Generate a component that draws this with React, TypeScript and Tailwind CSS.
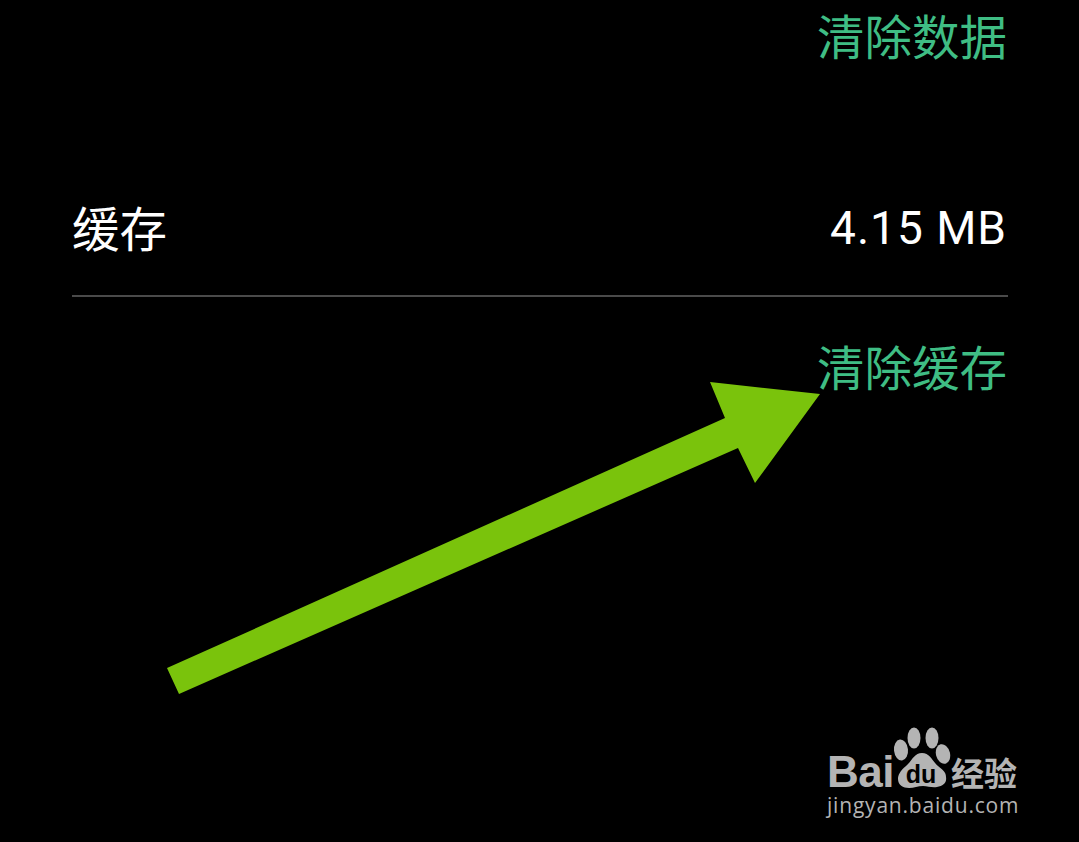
const cjk = "font-['Noto_Sans_CJK_SC','Noto_Sans',sans-serif]";

function Arrow() {
  return (
    <svg className="absolute left-0 top-0" width="1079" height="842" viewBox="0 0 1079 842">
      <polygon
        points="167,668 179,694 738,448 755,483 820,394 710,382 725,418"
        fill="#7ac30c"
      />
    </svg>
  );
}

function Watermark() {
  return (
    <div className="absolute left-[827px] top-[726px] w-[196px] h-[96px] text-[#b4b4b4]">
      <div className="absolute left-0 top-[28px] font-['Liberation_Sans',sans-serif] font-bold text-[44px] leading-[36px] tracking-[-0.5px]">
        Bai
      </div>
      <svg className="absolute left-[64px] top-0" width="60" height="66" viewBox="0 0 60 66">
        <ellipse cx="10" cy="24" rx="7" ry="10.5" transform="rotate(-6 10 24)" fill="currentColor" />
        <ellipse cx="23" cy="12" rx="6.5" ry="10.5" fill="currentColor" />
        <ellipse cx="41" cy="12" rx="6.5" ry="10.5" fill="currentColor" />
        <ellipse cx="52" cy="28" rx="7" ry="10" transform="rotate(-14 52 28)" fill="currentColor" />
        <path
          d="M31 27C23 27 21 35 15 40C9 45 7 49 7 53C7 59 12 62 18 62C23 62 27 60 32 60C37 60 41 62 46 61C52 60 56 57 55 51C55 46 52 44 47 40C42 36 39 27 31 27Z"
          fill="currentColor"
        />
      </svg>
      <div className="absolute left-[72px] top-[36px] w-[44px] text-center font-['Liberation_Sans',sans-serif] font-bold text-[25px] leading-[24px] text-black">
        du
      </div>
      <div className={`absolute left-[124px] top-[29px] font-bold text-[33px] leading-[34px] whitespace-nowrap ${cjk}`}>
        经验
      </div>
      <div className="absolute left-0 top-[67px] font-['Open_Sans',sans-serif] text-[21px] leading-[24px] tracking-[0.8px] whitespace-nowrap">
        jingyan.baidu.com
      </div>
    </div>
  );
}

export default function App() {
  return (
    <div className={`relative w-[1079px] h-[842px] overflow-hidden bg-black ${cjk}`}>
      <div className="flex flex-col px-[72px]">
        <div className="flex justify-end h-[70px] items-center text-[47.5px] leading-[60px] text-[#3fbd84]">
          清除数据
        </div>
        <div className="flex justify-between items-center mt-[119px] h-[76px] text-[47.5px] leading-[60px] text-white">
          <span>缓存</span>
          <span className="font-['Roboto',sans-serif] text-[46px] tracking-[1px] pt-[2px]">4.15 MB</span>
        </div>
        <div className="h-[2px] mt-[30px] w-[936px] bg-[#4a4a4a]" />
        <div className="flex justify-end h-[70px] mt-[34px] items-center text-[47.5px] leading-[60px] text-[#3fbd84]">
          清除缓存
        </div>
      </div>
      <Arrow />
      <Watermark />
    </div>
  );
}
